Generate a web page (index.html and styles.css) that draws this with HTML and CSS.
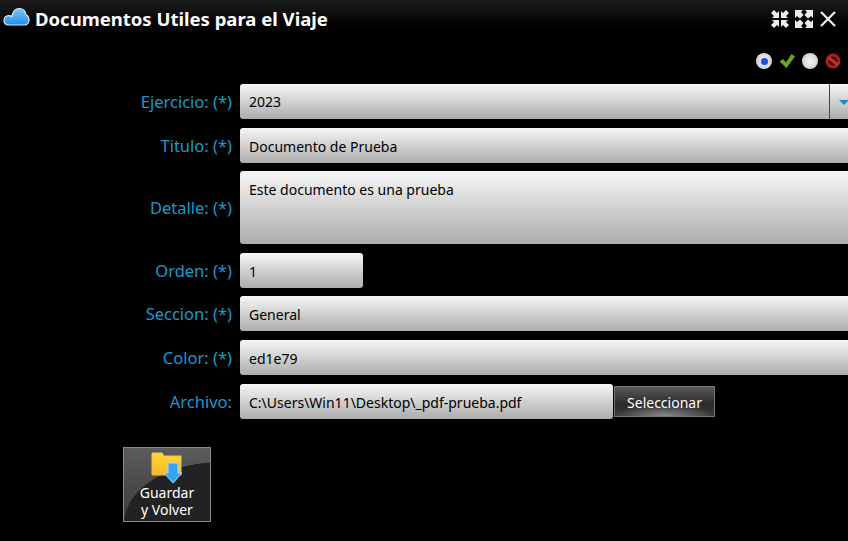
FILE: index.html
```html
<!DOCTYPE html>
<html lang="es">
<head>
    <meta charset="UTF-8">
    <title>Documentos Utiles para el Viaje</title>
    <link rel="stylesheet" href="styles.css">
</head>
<body>
    <header class="titlebar">
        <svg class="cloud" width="28" height="20" viewBox="0 0 28 20">
            <defs>
                <linearGradient id="cloudFill" x1="0" y1="0" x2="0" y2="1">
                    <stop offset="0" stop-color="#7cc8f8"/>
                    <stop offset="1" stop-color="#1a8fef"/>
                </linearGradient>
            </defs>
            <path d="M7 18C3.8 18 2 16 2 13.3C2 10.6 4 8.6 6.6 8.6C7.6 8.6 8.8 8.9 9.8 9.6C10.6 4.6 13.6 1.5 17.4 1.5C21 1.5 23.4 4 23.8 7.6C25.8 8.4 27 10.6 27 13C27 15.8 25 18 22.4 18Z" fill="url(#cloudFill)" stroke="#d8e8f4" stroke-width="1.2"/>
        </svg>
        <h1 class="title">Documentos Utiles para el Viaje</h1>
        <div class="window-tools">
            <svg width="18" height="18" viewBox="0 0 18 18" fill="#ececec">
                <path d="M0 3L3 0L6 3L8 1V8H1L3 6Z"/>
                <path d="M18 3L15 0L12 3L10 1V8H17L15 6Z"/>
                <path d="M0 15L3 18L6 15L8 17V10H1L3 12Z"/>
                <path d="M18 15L15 18L12 15L10 17V10H17L15 12Z"/>
            </svg>
            <svg width="18" height="18" viewBox="0 0 18 18" fill="#ececec">
                <path d="M0 0H8L6 2L8.5 5L5 8.5L2 6L0 8Z"/>
                <path d="M18 0H10L12 2L9.5 5L13 8.5L16 6L18 8Z"/>
                <path d="M0 18H8L6 16L8.5 13L5 9.5L2 12L0 10Z"/>
                <path d="M18 18H10L12 16L9.5 13L13 9.5L16 12L18 10Z"/>
            </svg>
            <svg width="18" height="18" viewBox="0 0 18 18" stroke="#ececec" stroke-width="2.2" fill="none">
                <path d="M2 2L16 16M16 2L2 16"/>
            </svg>
        </div>
    </header>

    <div class="status-icons">
        <span class="dot dot-selected"></span>
        <svg width="16" height="16" viewBox="0 0 16 16"><path d="M0.5 8.5L4 6L7 9.5L12.5 1L16 3.5L7.5 15Z" fill="#68a81f"/></svg>
        <span class="dot"></span>
        <svg width="16" height="16" viewBox="0 0 16 16">
            <circle cx="8" cy="8" r="6" fill="#3a0b08" stroke="#ad1f18" stroke-width="3"/>
            <path d="M3.5 4.5L12.5 11.5" stroke="#c2322a" stroke-width="3"/>
        </svg>
    </div>

    <form class="form">
        <label class="label">Ejercicio: (*)</label>
        <div class="field field-select">
            <span>2023</span>
            <span class="select-arrow"></span>
        </div>

        <label class="label">Titulo: (*)</label>
        <div class="field field-title">Documento de Prueba</div>

        <label class="label">Detalle: (*)</label>
        <div class="field field-area">Este documento es una prueba</div>

        <label class="label">Orden: (*)</label>
        <div class="field field-short">1</div>

        <label class="label">Seccion: (*)</label>
        <div class="field">General</div>

        <label class="label">Color: (*)</label>
        <div class="field">ed1e79</div>

        <label class="label">Archivo:</label>
        <div class="file-row">
            <div class="field field-file">C:\Users\Win11\Desktop\_pdf-prueba.pdf</div>
            <button type="button" class="btn-pick">Seleccionar</button>
        </div>
    </form>

    <button type="button" class="btn-save">
        <svg width="32" height="32" viewBox="0 0 32 32">
            <defs>
                <linearGradient id="folderFill" x1="0" y1="0" x2="0" y2="1">
                    <stop offset="0" stop-color="#ffd92e"/>
                    <stop offset="1" stop-color="#f7b52a"/>
                </linearGradient>
            </defs>
            <path d="M1 1H11L13 4H30V23H1Z" fill="url(#folderFill)" stroke="#e8c050" stroke-width="1"/>
            <path d="M17 11H27V21H31L22 31L13 21H17Z" fill="#36a4f4" stroke="#a8d8f8" stroke-width="1"/>
        </svg>
        <span>Guardar<br>y Volver</span>
    </button>
</body>
</html>
```

FILE: styles.css
```css
body {
    margin: 0;
    width: 848px;
    height: 541px;
    overflow: hidden;
    background-color: #000;
    font-family: Tahoma, "Noto Sans", sans-serif;
    font-size: 14px;
    color: #000;
}

.titlebar {
    display: flex;
    align-items: center;
    height: 36px;
    background: linear-gradient(#1c1c1c, #000 28px);
    padding: 0 11px 0 2px;
}

.cloud {
    margin: 0 5px 2px 0;
}

.title {
    flex: 1;
    margin: 0;
    font-size: 18.5px;
    font-weight: bold;
    color: #fff;
}

.window-tools {
    display: flex;
    gap: 6px;
    padding-top: 2px;
}

.status-icons {
    display: flex;
    justify-content: flex-end;
    align-items: center;
    gap: 7px;
    height: 16px;
    margin-top: 17px;
    padding-right: 7px;
}

.dot {
    width: 16px;
    height: 16px;
    border-radius: 50%;
    background: radial-gradient(#f4f4f4, #c4c4c4);
    display: flex;
    align-items: center;
    justify-content: center;
}

.dot-selected::before {
    content: "";
    width: 7px;
    height: 7px;
    border-radius: 50%;
    background-color: #1a4cf0;
}

.form {
    display: grid;
    grid-template-columns: 232px 640px;
    column-gap: 8px;
    row-gap: 9px;
    align-items: center;
    margin-top: 15px;
}

.label {
    text-align: right;
    font-size: 16.5px;
    color: #1b99d0;
}

.field {
    box-sizing: border-box;
    height: 35px;
    padding: 1px 9px 0;
    display: flex;
    align-items: center;
    border-radius: 3px;
    background: linear-gradient(#f6f6f6, #acacac);
}

.field-select {
    position: relative;
    padding-top: 0;
}

.select-arrow {
    position: absolute;
    left: 589px;
    top: 0;
    bottom: 0;
    width: 30px;
    border-left: 1px solid #444;
}

.select-arrow::after {
    content: "";
    position: absolute;
    left: 9px;
    top: 16px;
    border-left: 5px solid transparent;
    border-right: 5px solid transparent;
    border-top: 5px solid #1f86d0;
}

.field-title {
    height: 35px;
    margin-bottom: -1px;
}

.field-area {
    height: 73px;
    align-items: flex-start;
    padding-top: 9px;
}

.field-short {
    width: 123px;
    height: 35px;
    margin-bottom: -1px;
}

.file-row {
    display: flex;
    align-items: center;
}

.field-file {
    width: 373px;
}

.btn-pick {
    box-sizing: border-box;
    width: 101px;
    height: 31px;
    margin-left: 1px;
    padding: 1px 0 0;
    font-family: inherit;
    font-size: 14px;
    color: #fff;
    border: 1px solid #777;
    background:
        radial-gradient(ellipse 50% 40% at 50% 100%, #8a8a8a, transparent),
        linear-gradient(#585858, #2a2a2a 60%, #3a3a3a);
}

.btn-save {
    box-sizing: border-box;
    display: flex;
    flex-direction: column;
    align-items: center;
    width: 88px;
    height: 75px;
    margin: 28px 0 0 123px;
    padding: 4px 0 0;
    font-family: inherit;
    font-size: 14px;
    line-height: 17px;
    color: #fff;
    border: 1px solid #8a8a8a;
    background:
        radial-gradient(ellipse 95px 61px at 95px 75px, #222 99%, transparent 100%),
        linear-gradient(#5c5c5c, #3a3a3a);
}
```
